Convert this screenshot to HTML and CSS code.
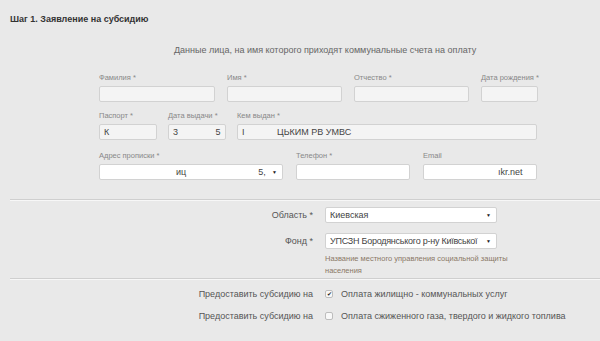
FILE: index.html
```html
<!DOCTYPE html>
<html lang="ru">
<head>
    <meta charset="UTF-8">
    <title>Заявление на субсидию</title>
    <link rel="stylesheet" href="styles.css">
</head>
<body>
    <div class="page">
        <h1 class="title">Шаг 1. Заявление на субсидию</h1>
        <p class="subtitle">Данные лица, на имя которого приходят коммунальные счета на оплату</p>

        <div class="person">
            <div class="row row-1">
                <div class="field w116"><label>Фамилия *</label><input type="text"></div>
                <div class="field w115"><label>Имя *</label><input type="text"></div>
                <div class="field w115"><label>Отчество *</label><input type="text"></div>
                <div class="field w57"><label>Дата рождения *</label><input type="text"></div>
            </div>
            <div class="row row-2">
                <div class="field w58"><label>Паспорт *</label><input type="text" value="К"></div>
                <div class="field w58"><label>Дата выдачи *</label><input type="text" value="3               5"></div>
                <div class="field w300"><label>Кем выдан *</label><input type="text" value="I             ЦЬКИМ РВ УМВС"></div>
            </div>
            <div class="row row-3">
                <div class="field w184"><label>Адрес прописки *</label>
                    <div class="select white"><span class="addr">иц</span><span class="addr-end">5,</span><span class="arrow">▼</span></div>
                </div>
                <div class="field w114"><label>Телефон *</label><input type="text" class="white"></div>
                <div class="field w114"><label>Email</label><input type="text" class="white email" value="ıkr.net"></div>
            </div>
        </div>

        <hr class="sep sep-top">

        <div class="line line-region">
            <span class="line-label">Область *</span>
            <div class="select region"><span class="value">Киевская</span><span class="arrow">▼</span></div>
        </div>
        <div class="line line-fund">
            <span class="line-label">Фонд *</span>
            <div class="control">
                <div class="select region"><span class="value fund-value">УПСЗН Бородянського р-ну Київської</span><span class="arrow">▼</span></div>
                <p class="help">Название местного управления социальной защиты населения</p>
            </div>
        </div>

        <hr class="sep sep-bottom">

        <div class="line check-line">
            <span class="line-label">Предоставить субсидию на</span>
            <label class="check"><span class="box">✔</span>Оплата жилищно - коммунальных услуг</label>
        </div>
        <div class="line check-line">
            <span class="line-label">Предоставить субсидию на</span>
            <label class="check"><span class="box"></span>Оплата сжиженного газа, твердого и жидкого топлива</label>
        </div>
    </div>
</body>
</html>
```

FILE: styles.css
```css
body{
    margin: 0;
    background-color: #e9e9e9;
    font-family: "Liberation Sans", Arial, sans-serif;
    color: #333;
}
.page{
    padding: 13px 0 0 10px;
}
.title{
    margin: 0;
    font-size: 9px;
    font-weight: bold;
    line-height: 12px;
    color: #333;
}
.subtitle{
    margin: 19px 0 0 0;
    padding-left: 164px;
    font-size: 9px;
    line-height: 12px;
    color: #666;
}

.person{
    margin: 17px 0 0 89px;
}
.row{
    display: flex;
    gap: 11px;
}
.row-1{
    gap: 12px;
}
.row-2{
    margin-top: 9px;
}
.row-3{
    margin-top: 11px;
    gap: 13px;
}
.field label{
    display: block;
    font-size: 7.5px;
    line-height: 10px;
    color: #888;
    margin-bottom: 3px;
    white-space: nowrap;
}
.field input{
    display: block;
    box-sizing: border-box;
    width: 100%;
    height: 16px;
    margin: 0;
    padding: 0 4px;
    border: 1px solid #d2d2d2;
    border-radius: 2px;
    background: #f4f4f4;
    font-family: "Liberation Sans", Arial, sans-serif;
    font-size: 9px;
    color: #444;
}
.field input.white{
    background: #fff;
}
.field input.email{
    padding-left: 74px;
}
.w116{ width: 116px; }
.w115{ width: 115px; }
.w57{ width: 57px; }
.w58{ width: 58px; }
.w300{ width: 300px; }
.w184{ width: 184px; }
.w114{ width: 114px; }

.select{
    box-sizing: border-box;
    display: flex;
    align-items: center;
    height: 16px;
    padding: 0 5px 0 4px;
    border: 1px solid #d2d2d2;
    border-radius: 2px;
    background: #fff;
    font-size: 9px;
    color: #444;
    white-space: nowrap;
}
.select .value{
    overflow: hidden;
    min-width: 0;
    flex: 1;
}
.select .fund-value{
    letter-spacing: -0.25px;
}
.select .arrow{
    margin-left: auto;
    padding-left: 3px;
    font-size: 5px;
    color: #222;
}
.addr{
    margin-left: 72px;
}
.addr-end{
    margin-left: 72px;
}

.sep{
    height: 0;
    margin: 0;
    border: 0;
    border-top: 1px solid #cfcfcf;
    border-bottom: 1px solid #f7f7f7;
}
.sep-top{
    margin-top: 19px;
}
.sep-bottom{
    margin-top: 1px;
}

.line{
    display: flex;
    align-items: flex-start;
}
.line-region{
    margin-top: 6px;
}
.line-fund{
    margin-top: 10px;
}
.line-label{
    box-sizing: border-box;
    flex: none;
    width: 315px;
    padding-right: 12px;
    text-align: right;
    font-size: 9px;
    line-height: 16px;
    color: #555;
}
.region{
    width: 172px;
}
.control{
    width: 190px;
}
.help{
    margin: 4px 0 0 0;
    font-size: 7.5px;
    line-height: 12px;
    color: #8a7866;
}

.check-line{
    margin-top: 6px;
}
.check{
    display: flex;
    align-items: center;
    font-size: 9px;
    line-height: 16px;
    color: #555;
}
.box{
    box-sizing: border-box;
    width: 8px;
    height: 8px;
    margin-right: 8px;
    border: 1px solid #bdbdbd;
    border-radius: 2px;
    background: #f8f8f8;
    font-size: 6px;
    line-height: 6px;
    text-align: center;
    color: #222;
}
```
